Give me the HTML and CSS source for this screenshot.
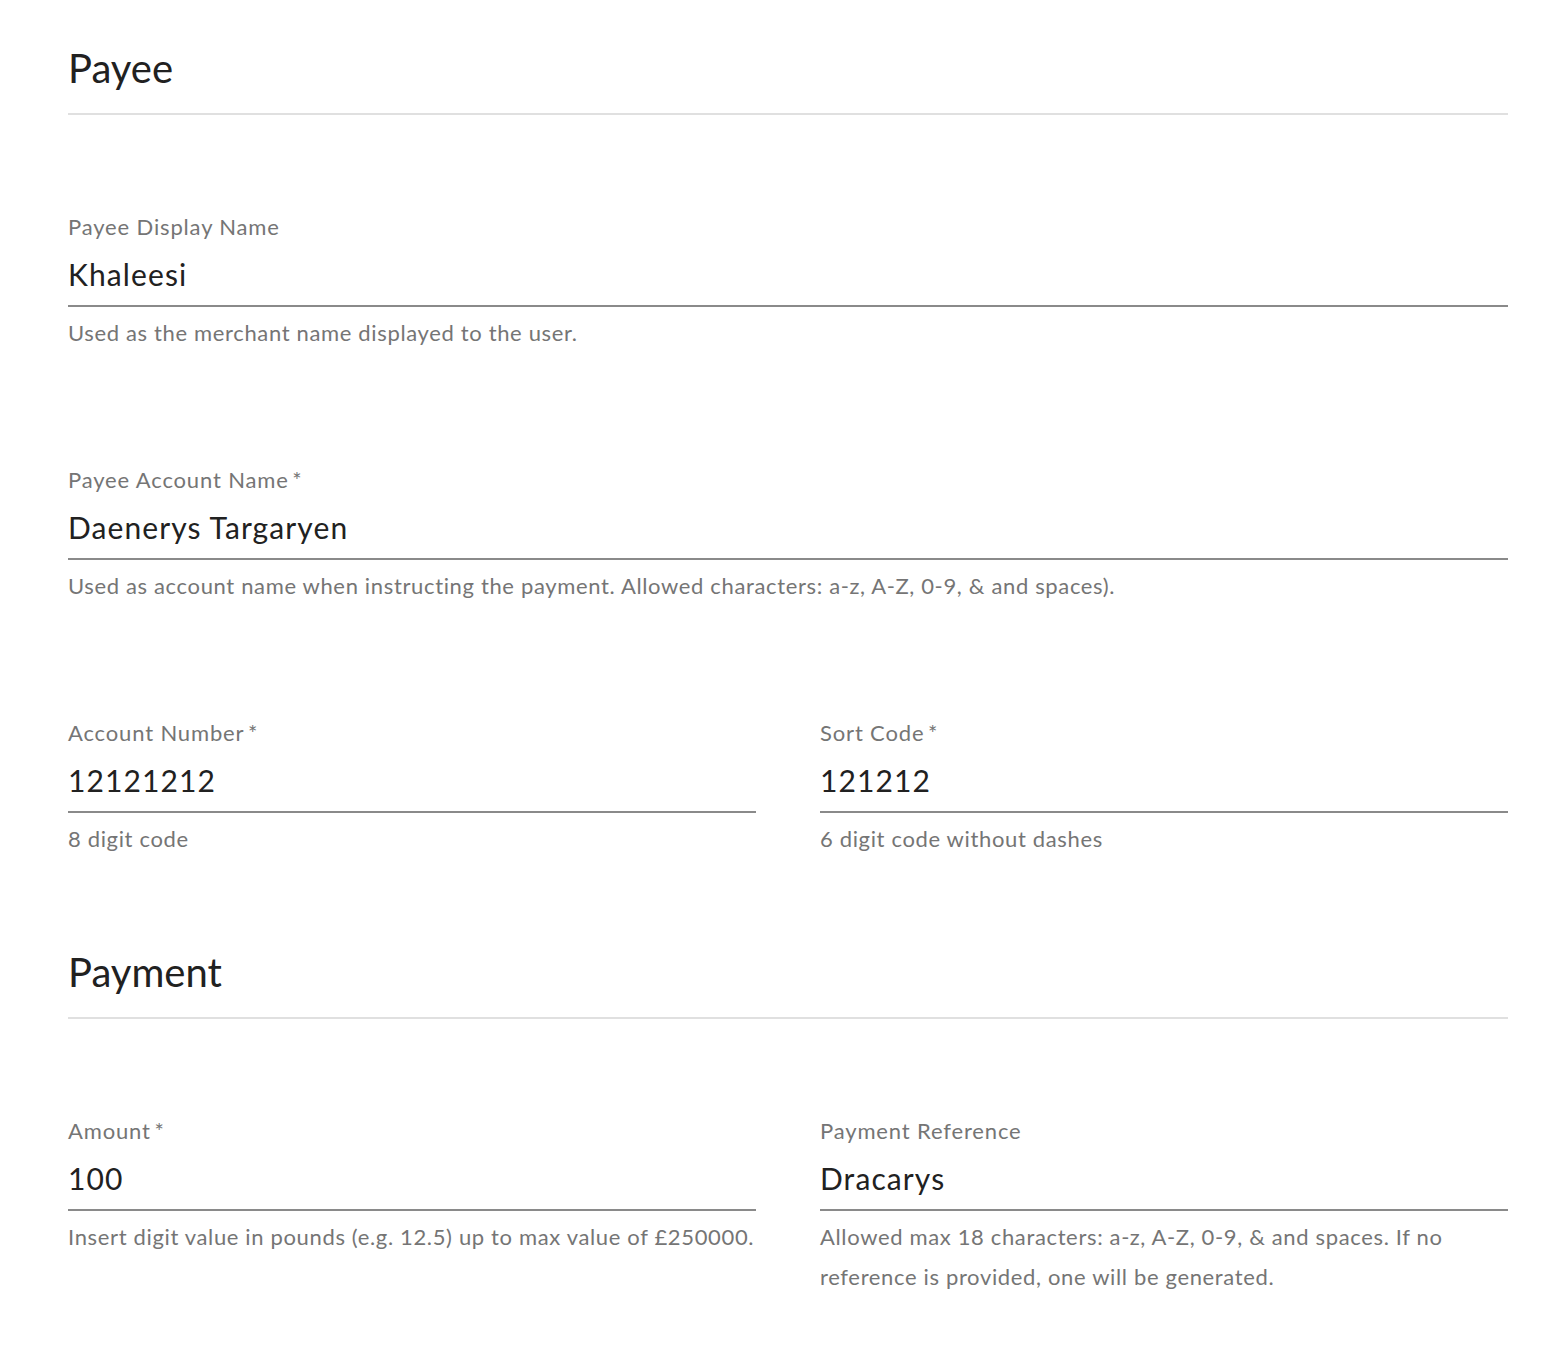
FILE: index.html
```html
<!DOCTYPE html>
<html lang="en">
<head>
<meta charset="utf-8">
<title>Payee</title>
<link rel="stylesheet" href="styles.css">
</head>
<body>
<main class="form">
  <section class="section">
    <h2 class="section-title">Payee</h2>
    <div class="field">
      <label class="field-label">Payee Display Name</label>
      <div class="field-input">Khaleesi</div>
      <p class="field-help">Used as the merchant name displayed to the user.</p>
    </div>
    <div class="field">
      <label class="field-label">Payee Account Name&thinsp;*</label>
      <div class="field-input">Daenerys Targaryen</div>
      <p class="field-help">Used as account name when instructing the payment. Allowed characters: a-z, A-Z, 0-9, &amp; and spaces).</p>
    </div>
    <div class="row">
      <div class="field">
        <label class="field-label">Account Number&thinsp;*</label>
        <div class="field-input">12121212</div>
        <p class="field-help">8 digit code</p>
      </div>
      <div class="field">
        <label class="field-label">Sort Code&thinsp;*</label>
        <div class="field-input">121212</div>
        <p class="field-help">6 digit code without dashes</p>
      </div>
    </div>
  </section>
  <section class="section">
    <h2 class="section-title">Payment</h2>
    <div class="row">
      <div class="field">
        <label class="field-label">Amount&thinsp;*</label>
        <div class="field-input">100</div>
        <p class="field-help">Insert digit value in pounds (e.g. 12.5) up to max value of £250000.</p>
      </div>
      <div class="field">
        <label class="field-label">Payment Reference</label>
        <div class="field-input">Dracarys</div>
        <p class="field-help">Allowed max 18 characters: a-z, A-Z, 0-9, &amp; and spaces. If no reference is provided, one will be generated.</p>
      </div>
    </div>
  </section>
</main>
</body>
</html>
```
FILE: styles.css
```css
html, body {
  margin: 0;
  padding: 0;
  background: #ffffff;
}
body {
  font-family: Lato, "Open Sans", sans-serif;
  color: #212121;
}
.form {
  width: 1440px;
  margin: 0 0 0 68px;
  padding-top: 44px;
}
.section + .section {
  margin-top: 89px;
}
.section-title {
  margin: 0;
  font-size: 40px;
  line-height: 48px;
  font-weight: 400;
  color: #212121;
  padding-bottom: 21px;
  border-bottom: 2px solid #e0e0e0;
  margin-bottom: 97px;
}
.field + .field,
.field + .row {
  margin-top: 112px;
}
.row {
  display: grid;
  grid-template-columns: 1fr 1fr;
  column-gap: 64px;
}
.row .field + .field {
  margin-top: 0;
}
.field-label {
  display: block;
  font-size: 22px;
  line-height: 30px;
  letter-spacing: 0.85px;
  color: #757575;
}
.field-input {
  margin-top: 12px;
  font-size: 30px;
  line-height: 40px;
  letter-spacing: 1.1px;
  color: #212121;
  padding-bottom: 11px;
  border-bottom: 2px solid #8a8a8a;
}
.field-help {
  margin: 6px 0 0;
  font-size: 22px;
  line-height: 40px;
  letter-spacing: 0.65px;
  color: #757575;
}
```
